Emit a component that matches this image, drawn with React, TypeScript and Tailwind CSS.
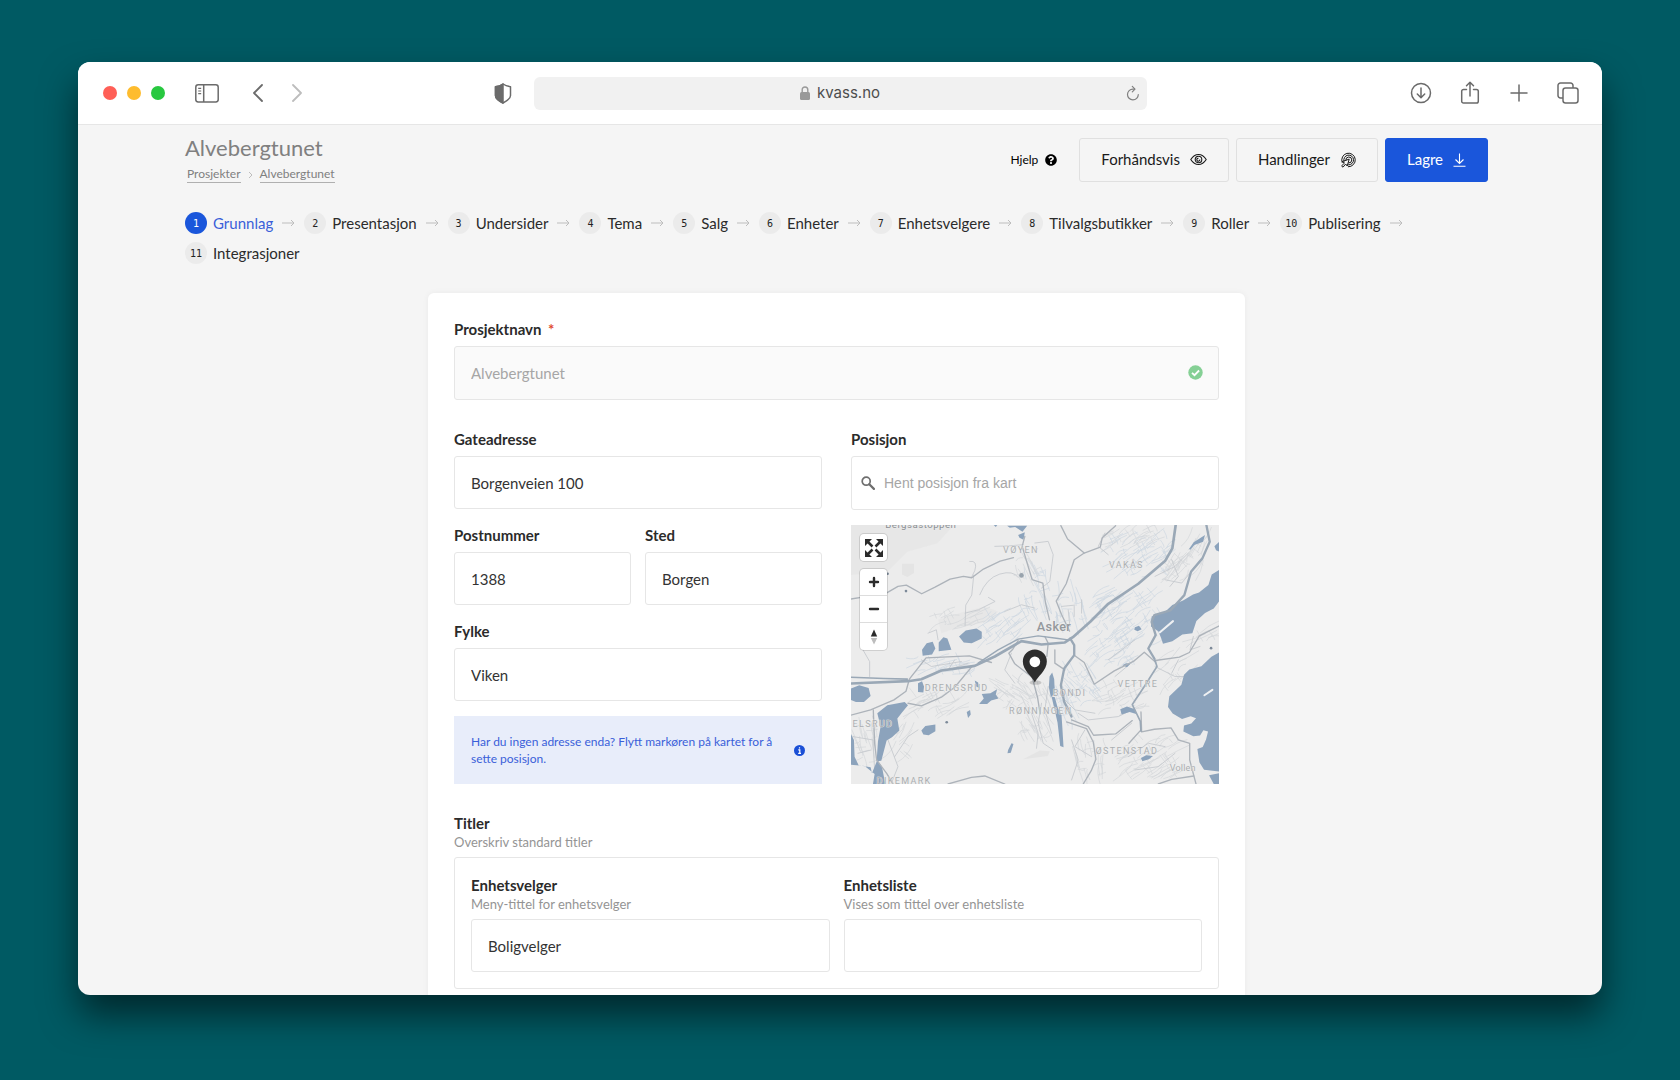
import React from "react";

const steps = [
  "Grunnlag",
  "Presentasjon",
  "Undersider",
  "Tema",
  "Salg",
  "Enheter",
  "Enhetsvelgere",
  "Tilvalgsbutikker",
  "Roller",
  "Publisering",
  "Integrasjoner",
];

const inputClass =
  "block h-[53px] w-full rounded-[3px] border border-[#e6e6e6] bg-white px-4 text-[15px] text-[#333] outline-none";

type FieldProps = { id: string; label: string; value?: string; hint?: string };

function Field({ id, label, value, hint }: FieldProps) {
  return (
    <div>
      <label htmlFor={id} className="mb-1.5 block text-[15px] leading-[22px] font-bold text-[#2b2b2b]">
        {label}
        {hint && <span className="block text-[13px] leading-[17px] font-normal text-[#949494]">{hint}</span>}
      </label>
      <input id={id} type="text" defaultValue={value} className={inputClass} />
    </div>
  );
}

const iconButton = "flex items-center justify-center text-[#6b6b6b]";

function BrowserBar() {
  return (
    <div className="grid h-[63px] shrink-0 grid-cols-[1fr_613px_1fr] items-center border-b border-[#e6e6e6] bg-white">
      <div className="flex items-center">
        <div className="ml-[25px] flex gap-[10px]">
          <span className="size-[14px] rounded-full bg-[#ff5f57]" />
          <span className="size-[14px] rounded-full bg-[#febc2e]" />
          <span className="size-[14px] rounded-full bg-[#28c840]" />
        </div>
        <button aria-label="Sidepanel" className={`ml-[30px] ${iconButton}`}>
          <svg width="24" height="19" viewBox="0 0 24 19" fill="none" stroke="currentColor" strokeWidth="1.5">
            <rect x="0.8" y="0.8" width="22.4" height="17.2" rx="2.4" />
            <path d="M8.7 1v17" />
            <path d="M3.2 4.3h3M3.2 7h3M3.2 9.7h3" strokeWidth="1.2" />
          </svg>
        </button>
        <button aria-label="Tilbake" className={`ml-[33px] ${iconButton}`}>
          <svg width="12" height="18" viewBox="0 0 12 18" fill="none" stroke="currentColor" strokeWidth="1.8" strokeLinecap="round" strokeLinejoin="round">
            <path d="M10 1L2 9l8 8" />
          </svg>
        </button>
        <button aria-label="Frem" className="ml-[27px] flex items-center text-[#bdbdbd]">
          <svg width="12" height="18" viewBox="0 0 12 18" fill="none" stroke="currentColor" strokeWidth="1.8" strokeLinecap="round" strokeLinejoin="round">
            <path d="M2 1l8 8-8 8" />
          </svg>
        </button>
        <button aria-label="Personvern" className={`mr-[22px] ml-auto ${iconButton}`}>
          <svg width="18" height="21" viewBox="0 0 18 21" fill="none" stroke="currentColor" strokeWidth="1.5" strokeLinejoin="round">
            <path d="M9 1c2 1.400 4.500 2.300 7.500 2.700v8.800c0 3-3.500 5.500-7.500 7.500-4-2-7.500-4.500-7.500-7.500V3.700C4.500 3.300 7 2.400 9 1z" />
            <path d="M9 1v19c-4-2-7.500-4.500-7.500-7.500V3.700C4.500 3.300 7 2.400 9 1z" fill="currentColor" />
          </svg>
        </button>
      </div>
      <div className="flex h-[33px] items-center rounded-md bg-[#f1f1f1] pr-[6px] pl-[22px]">
        <div className="flex flex-1 items-center justify-center gap-[7px] font-[Inter,sans-serif] text-[15px] text-[#4d4d4d]">
          <svg width="10" height="14" viewBox="0 0 10 14" fill="none" className="text-[#999]">
            <rect x="0" y="6" width="10" height="8" rx="1.500" fill="currentColor" />
            <path d="M2.200 6.500V3.800C2.200 2 3.300 1 5 1s2.800 1 2.800 2.800v2.700" stroke="currentColor" strokeWidth="1.400" />
          </svg>
          kvass.no
        </div>
        <button aria-label="Last inn på nytt" className="text-[#808080]">
          <svg width="16" height="17" viewBox="0 0 16 17" fill="none" stroke="currentColor" strokeWidth="1.2" strokeLinecap="round" strokeLinejoin="round">
            <path d="M13.300 9.500A5.400 5.400 0 1 1 8 4.100h1.500" />
            <path d="M7.300 1.400l2.700 2.700-2.700 2.700" />
          </svg>
        </button>
      </div>
      <div className="flex items-center justify-end gap-[27px] pr-[23px]">
        <button aria-label="Nedlastinger" className={iconButton}>
          <svg width="22" height="22" viewBox="0 0 22 22" fill="none" stroke="currentColor" strokeWidth="1.5" strokeLinecap="round" strokeLinejoin="round">
            <circle cx="11" cy="11" r="9.500" />
            <path d="M11 6v9.500M7.300 12l3.700 3.700 3.700-3.700" />
          </svg>
        </button>
        <button aria-label="Del" className={iconButton}>
          <svg width="22" height="24" viewBox="0 0 22 24" fill="none" stroke="currentColor" strokeWidth="1.500" strokeLinecap="round" strokeLinejoin="round">
            <path d="M7.500 8.500H4.500A1.800 1.800 0 0 0 2.700 10.300v10a1.800 1.800 0 0 0 1.800 1.800h13a1.800 1.800 0 0 0 1.800-1.800v-10a1.800 1.800 0 0 0-1.800-1.800h-3" />
            <path d="M11 15V1.500M7.500 4.800L11 1.300l3.500 3.500" />
          </svg>
        </button>
        <button aria-label="Ny fane" className={iconButton}>
          <svg width="22" height="22" viewBox="0 0 22 22" fill="none" stroke="currentColor" strokeWidth="1.500" strokeLinecap="round">
            <path d="M11 3v16M3 11h16" />
          </svg>
        </button>
        <button aria-label="Vis faner" className={iconButton}>
          <svg width="22" height="22" viewBox="0 0 22 22" fill="none" stroke="currentColor" strokeWidth="1.500" strokeLinejoin="round">
            <rect x="6" y="6" width="15" height="15" rx="2.500" />
            <path d="M6 16H3.500A2.500 2.500 0 0 1 1 13.500v-10A2.500 2.500 0 0 1 3.500 1h10A2.500 2.500 0 0 1 16 3.500V6" />
          </svg>
        </button>
      </div>
    </div>
  );
}

function PageHeader() {
  return (
    <header className="flex items-center justify-between pt-[11px]">
      <div>
        <h1 className="text-[22px] leading-[24px] text-[#808080]">Alvebergtunet</h1>
        <nav aria-label="Brødsmuler" className="mt-1.5 flex items-center px-0.5 text-[12px] leading-[16px] text-[#808080]">
          <a href="#prosjekter" className="border-b border-[#b0b0b0]">
            Prosjekter
          </a>
          <svg width="19" height="8" viewBox="0 0 19 8" fill="none" stroke="#bdbdbd">
            <path d="M8 1l3 3-3 3" />
          </svg>
          <a href="#alvebergtunet" className="border-b border-[#b0b0b0]">
            Alvebergtunet
          </a>
        </nav>
      </div>
      <div className="flex items-center gap-[7px] text-[15px] text-[#1a1a1a]">
        <a href="#hjelp" className="mr-[15px] flex items-center gap-[7px] text-[12px] text-black">
          Hjelp
          <svg width="12" height="12" viewBox="0 0 512 512" fill="currentColor">
            <path d="M504 256c0 137-111 248-248 248S8 393 8 256 119 8 256 8s248 111 248 248zM262.700 90c-54.500 0-89.300 23-116.500 63.800-3.500 5.300-2.400 12.400 2.700 16.300l34.700 26.300c5.200 3.900 12.600 3 16.700-2.100 17.900-22.700 30.100-35.800 57.300-35.800 20.400 0 45.700 13.100 45.700 33 0 15-12.400 22.700-32.500 34C247.100 238.500 216 254.900 216 296v4c0 6.600 5.400 12 12 12h56c6.600 0 12-5.400 12-12v-1.300c0-28.500 83.200-29.600 83.200-106.700 0-58-60.200-102-116.500-102zM256 338c-25.400 0-46 20.600-46 46s20.600 46 46 46 46-20.600 46-46-20.600-46-46-46z" />
          </svg>
        </a>
        <button className="flex h-11 items-center gap-[10px] rounded-[3px] border border-[#e0e0e0] px-[21px]">
          Forhåndsvis
          <svg width="17" height="13" viewBox="0 0 17 13" fill="none" stroke="currentColor" strokeWidth="1.100">
            <path d="M.8 6.500C2.800 3.300 5.400 1.500 8.500 1.500s5.700 1.800 7.700 5c-2 3.200-4.600 5-7.700 5s-5.700-1.800-7.700-5z" />
            <circle cx="8.500" cy="6.500" r="3.300" />
            <path d="M8.500 5.200a1.500 1.500 0 1 0 1.300 1.300" />
          </svg>
        </button>
        <button className="flex h-11 items-center gap-[10px] rounded-[3px] border border-[#e0e0e0] px-[21px]">
          Handlinger
          <svg width="16" height="16" viewBox="0 0 16 16" fill="none" stroke="currentColor" strokeWidth="1" strokeLinecap="round" strokeLinejoin="round">
            <path d="M2.100 10.400A6.800 6.800 0 1 1 8.300 14.800" />
            <path d="M3.900 9.200a4.900 4.900 0 1 1 4.600 3.700" />
            <path d="M5.800 8.200a3 3 0 1 1 3 2.800" />
            <path d="M9.100 7.500L7.200 14l-1.500-2L3 15.200l-1.400-1.300L4.500 11l-2-1.200z" />
          </svg>
        </button>
        <button className="flex h-11 items-center gap-[10px] rounded-[3px] border border-[#1a56db] bg-[#1a56db] px-[21px] text-white">
          Lagre
          <svg width="13" height="14" viewBox="0 0 13 14" fill="none" stroke="currentColor" strokeWidth="1.100">
            <path d="M6.500 .5v10M2.500 6.500l4 4 4-4M.5 13.300h12" />
          </svg>
        </button>
      </div>
    </header>
  );
}

function Steps() {
  return (
    <nav aria-label="Steg" className="mt-[29px] flex flex-wrap gap-x-[9px] gap-y-[8px]">
      {steps.map((step, i) => (
        <div key={step} className="flex items-center">
          <a href={`#steg-${i + 1}`} className="flex items-center gap-[6px]">
            <span
              className={
                i === 0
                  ? "flex size-[22px] items-center justify-center rounded-full bg-[#1a56db] font-['DejaVu_Sans_Mono',monospace] text-[10px] text-white"
                  : "flex size-[22px] items-center justify-center rounded-full bg-[#ebebeb] font-['DejaVu_Sans_Mono',monospace] text-[10px] text-[#222]"
              }
            >
              {i + 1}
            </span>
            <span className={i === 0 ? "text-[15px] leading-[22px] text-[#3a5fd9]" : "text-[15px] leading-[22px] text-[#2b2b2b]"}>
              {step}
            </span>
          </a>
          {i < steps.length - 1 && (
            <svg width="13" height="8" viewBox="0 0 13 8" fill="none" stroke="#bdbdbd" className="ml-[9px]">
              <path d="M0 4h12M9 1l3 3-3 3" />
            </svg>
          )}
        </div>
      ))}
    </nav>
  );
}

type Area = { x: number; y: number; w: number; h: number; angle: number; n: number; blue?: boolean };

const residential: Area[] = [
  { x: 890, y: 400, w: 190, h: 120, angle: -33, n: 60, blue: true },
  { x: 850, y: 590, w: 190, h: 150, angle: -35, n: 80, blue: true },
  { x: 860, y: 350, w: 150, h: 60, angle: -30, n: 26 },
  { x: 990, y: 440, w: 60, h: 60, angle: -50, n: 20 },
  { x: 800, y: 690, w: 130, h: 90, angle: -38, n: 32, blue: true },
  { x: 570, y: 500, w: 90, h: 150, angle: 70, n: 28, blue: true },
  { x: 480, y: 620, w: 130, h: 90, angle: -38, n: 36, blue: true },
  { x: 340, y: 600, w: 140, h: 50, angle: -20, n: 20 },
  { x: 300, y: 735, w: 200, h: 50, angle: -18, n: 28, blue: true },
  { x: 270, y: 850, w: 150, h: 70, angle: -30, n: 30 },
  { x: 500, y: 810, w: 90, h: 90, angle: 35, n: 26 },
  { x: 570, y: 880, w: 90, h: 150, angle: 62, n: 40 },
  { x: 710, y: 790, w: 100, h: 120, angle: 50, n: 34, blue: true },
  { x: 830, y: 830, w: 130, h: 90, angle: -25, n: 28 },
  { x: 910, y: 1010, w: 180, h: 120, angle: -35, n: 56 },
  { x: 740, y: 1020, w: 100, h: 110, angle: 80, n: 26 },
  { x: 60, y: 970, w: 60, h: 120, angle: 75, n: 22 },
  { x: 160, y: 960, w: 60, h: 100, angle: -60, n: 14 },
  { x: 1050, y: 400, w: 60, h: 110, angle: -60, n: 20 },
  { x: 990, y: 760, w: 90, h: 110, angle: -40, n: 14 },
  { x: 1070, y: 650, w: 70, h: 60, angle: -30, n: 10 },
  { x: 660, y: 850, w: 60, h: 90, angle: 70, n: 18, blue: true },
  { x: 680, y: 560, w: 90, h: 110, angle: 80, n: 22, blue: true },
  { x: 550, y: 430, w: 60, h: 80, angle: 60, n: 12 },
];

function streetPath(a: Area, seed: number) {
  let s = seed;
  const rnd = () => {
    s = (s * 16807) % 2147483647;
    return s / 2147483647;
  };
  const rad = (a.angle * Math.PI) / 180;
  let d = "";
  for (let i = 0; i < a.n; i++) {
    const px = a.x + (rnd() - 0.5) * a.w;
    const py = a.y + (rnd() - 0.5) * a.h;
    const dir = rad + (rnd() - 0.5) * 0.4 + (i % 3 === 2 ? 1.6 : 0);
    const len = i % 3 === 2 ? 14 + rnd() * 22 : 28 + rnd() * 44;
    const dx = Math.cos(dir) * len;
    const dy = Math.sin(dir) * len;
    const bend = (rnd() - 0.5) * 22;
    d += `M${Math.round(px - dx / 2)} ${Math.round(py - dy / 2)}q${Math.round(dx / 2 + bend)} ${Math.round(dy / 2 + bend)} ${Math.round(dx)} ${Math.round(dy)}`;
  }
  return d;
}

function MapDrawing() {
  return (
    <svg
      className="block h-full w-full"
      viewBox="18 316 1105 776"
      preserveAspectRatio="xMidYMid slice"
      fill="none"
      strokeLinejoin="round"
      strokeLinecap="round"
      role="img"
      aria-label="Kart over Asker"
    >
      <rect x="0" y="300" width="1140" height="810" fill="#ececec" />
      <g fill="#e4e4e4">
        <path d="M18 316h310l-50 55-90 25-60 60-110 10z" opacity=".6" />
        <path d="M172 432h36v28l-20 12-16-8z" />
        <path d="M280 600l80-25 60-15 40 15-20 30-90 15-60 20z" opacity=".6" />
        <path d="M535 1018l50-26 30 2-6 14z" />
      </g>
      {residential.map((a, i) => (
        <path key={i} d={streetPath(a, 1234 + i * 977)} stroke={a.blue ? "#ccd7e1" : "#d3d7da"} strokeWidth="2" />
      ))}
      <g stroke="#c4c8cc" strokeWidth="2.500">
        <path d="M387 466l-6 60-18 30-2 62M375 425q25-4 15 28l-10 20M361 580l40-10 50-25-20-12M55 690l20 35 0 45" />
        <path d="M405 525q20-50 60-62t55 10M480 575l50-20 40 10M450 380q40 0 85-5M570 370l40-5 15 40-10 80-25 20" />
        <path d="M590 850l-10 60 15 60 30 20M560 880l20 60-5 45M610 800l-10 70 20 70M500 700l-20 50 30 40" />
        <path d="M780 340l-20 40 30 25M930 470l60-30 40-40M980 420l20 50-25 30M960 480l50 10 50-60" />
        <path d="M930 740l60 30 40 0M1000 720l-20 40M1045 650l-10 40 30-10M985 870l40-40 30-30" />
        <path d="M700 880l30 20 90-10 40-20M650 830l40 40 60 10M810 770l60-50M790 720l80-60" />
        <path d="M25 950l60 10 5 90M40 1000l40-10M150 1010l40-60 30-20M130 960l30 80-20 50M250 640l25-10 5 30" />
        <path d="M680 960l20 60-20 60M720 930l-30 50 50 30M800 960l60-50M850 1010l60-40 50 10M990 1000l-50 40-70 10" />
        <path d="M650 560l40-4M710 540v40M670 570l5 50M688 560v30M330 720l-20 30 60-20M230 720l30 20 90-15" />
      </g>
      <g fill="#8ca3bc">
        <path d="M1123 450l-23 14-10 32-28 22-18 6-30 18-32 14-24 22-38 12-2 30 22 14 8 20 6 18 28-8 30-20 30-4 12-36 26-24 26-14 17-22z" />
        <path d="M1123 697l-24 14-30 28-36 10-16 16-8 30-36 34-4 32 14 20 28 16 26-8 16 6-14 16-22 6-2 18 30 14 20-2 10-16 14 4-6 24-10 22-16 6 6 40 14 22 46 6z" />
        <path d="M343 650l20-18 32-6 16 10 0 20-30 14-24-2zM232 690l14-20 18-4 8 20-10 18-28 4zM282 668l14-16 12 4 12 34-38 4z" />
        <path d="M18 806l26-10 28 8 6 24-20 18-24 0-16-6zM220 790l12-6 6 16-2 18-16-2zM230 932l12-14 30-4 0 20-20 12-16-2z" />
        <path d="M98 880l30-24 52-10 10 10-18 22-14 18 6 36-22 20-16 10-16 60-14 2 4-60 8-44z" />
        <path d="M18 940l10 20 2 50 12 26 36 6 4 18 16-40 14 20 10 52H85l5-30-30-24-42-4z" />
        <path d="M403 852l14-16-6-14 26-2 20-12-4 16 8 12-22 6-12 10zM390 782l10 6 4 16-10-4zM366 876l10-6 2 14-8 10zM490 990l10-20 6 2-8 26-10 2z" />
        <path d="M614 770l8-12 6 20 2 42-12 12-6-30zM620 830l10 2 8 30 12 24 2 30 4 66-10-4-8-70-10-44z" />
        <path d="M487 318l60 0-14 18-22-14-16 2zM520 346l20-8-4 22-12-6zM1032 388l14-20 34-22-6 20-26 10-12 14zM1108 380l15-14v30l-10-4z" />
        <path d="M870 622l12-4 8 10-12 6-10-4zM832 736l12-6 12 2-10 10zM826 868l20-8 24 8 4 14-20-6-24 8zM1092 1066l30-6v32h-16z" />
        <path d="M888 1014l16-8 20 2-12 10-20 6zM445 314l14 0-6 8z" />
      </g>
      <g stroke="#eef0f2" strokeWidth="6">
        <path d="M944 638l40-34M1078 826l24-16" />
      </g>
      <circle cx="184" cy="514" r="4" fill="#7d8a99" />
      <circle cx="306" cy="907" r="4" fill="#7d8a99" />
      <circle cx="129" cy="462" r="4" fill="#7d8a99" />
      <circle cx="530" cy="467" r="7" fill="#98a3ad" />
      <circle cx="1098" cy="685" r="4" fill="#7d8a99" />
      <g stroke="#adb3ba" strokeWidth="4">
        <path d="M18 538l50-8 22-8 35-2 35-20 25-4 46 26 40-20 45-24 40-8 25 4 35-26 50-24 40-10" />
        <path d="M540 350l-8 30 12 40 18 60 32 10 8 60 12 50M648 318l20 40 50 42-30 20-24 72-30 52 16 40 24 50" />
        <path d="M718 400l48-18 6-28 40-36M688 706l30 22 30 65 60-40 60-30 30-26 34 30" />
        <path d="M1123 618l-60 30-30 50-30 14-72 10M888 876l2 60 38-8 50-4 22 36 34 10 0 50 20 76" />
        <path d="M18 886l60-16 70-30 36-26 10-36 50-64 130-6 66 20M190 850l40 8 60-26 40-30 50-60" />
        <path d="M520 662l-16 26-12 12 18 32 52 40 16 60 8 50M86 870l4 100 6 50 30 40 20 32" />
        <path d="M310 1092l70-20 40-4 60 24M715 1092l24-40 14-34-8-52-20-40-60-20M680 900l50 20 16 26 66-4 50-40" />
        <path d="M852 970l34-38M940 1092l40-14 66-10M630 690v40l30 20M600 650l10 20-4 40" />
      </g>
      <g stroke="#9aa8b6">
        <path d="M18 772l100 4 70 2" strokeWidth="5" />
        <path d="M18 791L190 784 230 778 290 752 390 738 450 710 530 664 590 674 660 668 684 652 736 606 790 552 880 492 960 424 982 386 992 316" strokeWidth="8" />
        <path d="M400 730L460 690 520 658 580 648 640 656 670 660" strokeWidth="4" />
        <path d="M676 656l12 20 0 30-30 40-10 50 10 50 22 44" strokeWidth="7" />
        <path d="M1084 316l10 50-22 50-34 40-20 70-42 46-48 14-8 20 12 40-22 40 18 30" strokeWidth="7" />
        <path d="M928 716l8 24-38 60-36 54 24 50 2 30" strokeWidth="5" />
      </g>
      <g className="font-[Roboto,sans-serif]" fill="#abaeb1" stroke="#efefef" strokeWidth="2" paintOrder="stroke">
        <text x="122" y="326" fontSize="29" fill="#8b8f93" className="tracking-wider">Bergsåstoppen</text>
        <text x="576" y="633" fontSize="38" fontWeight="500" fill="#94989c" className="tracking-wide">Asker</text>
        <g fontSize="27" className="tracking-[0.15em]">
          <text x="475" y="401">VØYEN</text>
          <text x="792" y="446">VAKÅS</text>
          <text x="240" y="812">DRENGSRUD</text>
          <text x="624" y="827">BONDI</text>
          <text x="818" y="802">VETTRE</text>
          <text x="493" y="883">RØNNINGEN</text>
          <text x="24" y="921">ELSRUD</text>
          <text x="752" y="1001">ØSTENSTAD</text>
          <text x="96" y="1092">DIKEMARK</text>
        </g>
        <text x="974" y="1054" fontSize="27" className="tracking-wide">Vollen</text>
      </g>
      <ellipse cx="572" cy="788" rx="18" ry="7" fill="#000" opacity=".16" />
      <path d="M570 788c-8-18-36-36-36-63a36 36 0 0 1 72 0c0 27-28 45-36 63z" fill="#2d2d2d" />
      <circle cx="570" cy="726" r="16" fill="#fff" />
    </svg>
  );
}

function MapPanel() {
  return (
    <div className="relative mt-[15px] h-[259px] overflow-hidden">
      <MapDrawing />
      <div className="absolute top-[9px] left-[9px] flex flex-col gap-2 text-[#2b2b2b]">
        <button aria-label="Fullskjerm" className="flex size-[27px] items-center justify-center rounded bg-white shadow-[0_0_0_1px_rgba(0,0,0,0.12)]">
          <svg width="18" height="18" viewBox="0 0 18 18" fill="currentColor" stroke="currentColor" strokeWidth="2.500">
            <path d="M0 0h7L0 7zM18 0v7l-7-7zM0 18v-7l7 7zM18 18h-7l7-7z" stroke="none" />
            <path d="M2.500 2.500L7.500 7.500M15.500 2.500l-5 5M2.500 15.500l5-5M15.500 15.500l-5-5" />
          </svg>
        </button>
        <div className="flex flex-col divide-y divide-[#ddd] rounded bg-white shadow-[0_0_0_1px_rgba(0,0,0,0.12)]">
          <button aria-label="Zoom inn" className="flex size-[27px] items-center justify-center">
            <svg width="12" height="12" viewBox="0 0 12 12" stroke="currentColor" strokeWidth="2.400" strokeLinecap="round">
              <path d="M6 2v8M2 6h8" />
            </svg>
          </button>
          <button aria-label="Zoom ut" className="flex size-[27px] items-center justify-center">
            <svg width="12" height="12" viewBox="0 0 12 12" stroke="currentColor" strokeWidth="2.400" strokeLinecap="round">
              <path d="M2 6h8" />
            </svg>
          </button>
          <button aria-label="Nullstill retning" className="flex size-[27px] items-center justify-center">
            <svg width="8" height="16" viewBox="0 0 8 16">
              <path d="M.8 7.500h6.400L4 .6z" fill="currentColor" />
              <path d="M.8 9h6.400L4 15.500z" fill="#bdbdbd" />
            </svg>
          </button>
        </div>
      </div>
    </div>
  );
}

function ProjectForm() {
  return (
    <form className="mx-auto mt-[29px] flex w-full max-w-[817px] shrink-0 flex-col gap-[28px] rounded-md bg-white px-[26px] py-[25px] shadow-[0_0_6px_rgba(0,0,0,0.05)]">
      <div>
        <label htmlFor="prosjektnavn" className="mb-1.5 block text-[15px] leading-[22px] font-bold text-[#2b2b2b]">
          Prosjektnavn <span className="ml-[3px] text-[#e0492f]">*</span>
        </label>
        <div className="relative">
          <input
            id="prosjektnavn"
            type="text"
            disabled
            defaultValue="Alvebergtunet"
            className="block h-[54px] w-full rounded-[3px] border border-[#e6e6e6] bg-[#fafafa] px-4 text-[15px] text-[#a6a6a6]"
          />
          <svg className="absolute top-[19px] right-4" width="15" height="15" viewBox="0 0 15 15" fill="none">
            <circle cx="7.500" cy="7.500" r="7.200" fill="#85d095" />
            <path d="M4 7.800l2.500 2.400 4.600-4.700" stroke="#fff" strokeWidth="1.800" />
          </svg>
        </div>
      </div>

      <div className="grid grid-cols-2 gap-x-[29px]">
        <div className="flex flex-col gap-[15px]">
          <Field id="gateadresse" label="Gateadresse" value="Borgenveien 100" />
          <div className="grid grid-cols-2 gap-[14px]">
            <Field id="postnummer" label="Postnummer" value="1388" />
            <Field id="sted" label="Sted" value="Borgen" />
          </div>
          <Field id="fylke" label="Fylke" value="Viken" />
          <div className="flex flex-1 items-center justify-between gap-3 bg-[#e8edfa] px-[17px] text-[12px] leading-[17px] text-[#3a5fd9]">
            <p>Har du ingen adresse enda? Flytt markøren på kartet for å sette posisjon.</p>
            <svg width="11" height="11" viewBox="0 0 11 11" className="shrink-0 text-[#1a4fd6]">
              <circle cx="5.500" cy="5.500" r="5.500" fill="currentColor" />
              <path d="M4.300 4.800h1.500v3.400M4.200 8.400h2.800M5.500 2.200v1.400" stroke="#fff" strokeWidth="1.200" fill="none" />
            </svg>
          </div>
        </div>
        <div>
          <label htmlFor="posisjon" className="mb-1.5 block text-[15px] leading-[22px] font-bold text-[#2b2b2b]">
            Posisjon
          </label>
          <div className="flex h-[54px] items-center gap-[9px] rounded-[3px] border border-[#e6e6e6] bg-white pl-[9px]">
            <svg width="14" height="14" viewBox="0 0 14 14" fill="none" stroke="#6e6e6e" className="shrink-0">
              <circle cx="5.200" cy="5.200" r="4" strokeWidth="1.700" />
              <path d="M8.300 8.300l4.600 4.600" strokeWidth="2.200" strokeLinecap="round" />
            </svg>
            <input
              id="posisjon"
              type="search"
              placeholder="Hent posisjon fra kart"
              className="h-full flex-1 font-['Liberation_Sans',sans-serif] text-[14px] outline-none placeholder:text-[#a6a6a6]"
            />
          </div>
          <MapPanel />
        </div>
      </div>

      <section>
        <h2 className="text-[15px] leading-[22px] font-bold text-[#2b2b2b]">Titler</h2>
        <p className="mb-1.5 text-[13px] leading-[17px] text-[#949494]">Overskriv standard titler</p>
        <div className="grid grid-cols-2 gap-[14px] rounded-[3px] border border-[#e6e6e6] p-4">
          <Field id="enhetsvelger" label="Enhetsvelger" hint="Meny-tittel for enhetsvelger" value="Boligvelger" />
          <Field id="enhetsliste" label="Enhetsliste" hint="Vises som tittel over enhetsliste" />
        </div>
      </section>
    </form>
  );
}

export default function App() {
  return (
    <div className="flex h-screen flex-col overflow-hidden bg-[#005a63] px-[78px] pt-[62px] pb-[85px] font-[Lato,sans-serif]">
      <div className="flex min-h-0 flex-1 flex-col overflow-hidden rounded-xl bg-[#f5f5f5] shadow-[0_20px_36px_rgba(0,0,0,0.55)]">
        <BrowserBar />
        <main className="flex min-h-0 flex-1 flex-col overflow-hidden pr-[114px] pl-[107px]">
          <PageHeader />
          <Steps />
          <ProjectForm />
        </main>
      </div>
    </div>
  );
}
